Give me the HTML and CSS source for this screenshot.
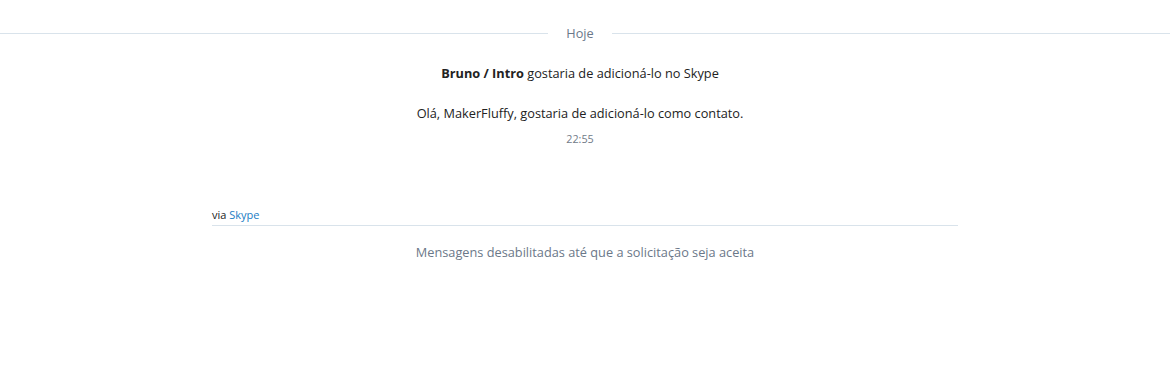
FILE: index.html
```html
<!DOCTYPE html>
<html lang="pt-BR">
<head>
  <meta charset="UTF-8" />
  <meta name="viewport" content="width=device-width, initial-scale=1.0" />
  <title>Solicitação de contato</title>
  <link rel="stylesheet" href="styles.css">
</head>
<body>
<div class="day">
  <span class="day-line"></span>
  <span class="day-label">Hoje</span>
  <span class="day-line day-line-end"></span>
</div>
<div class="request">
  <p class="request-title"><b>Bruno / Intro</b> gostaria de adicioná-lo no Skype</p>
  <p class="request-text">Olá, MakerFluffy, gostaria de adicioná-lo como contato.</p>
  <p class="request-time">22:55</p>
</div>
<div class="composer">
  <div class="via">via <a href="#">Skype</a></div>
  <div class="notice">Mensagens desabilitadas até que a solicitação seja aceita</div>
</div>
</body>
</html>
```

FILE: styles.css
```css
body {
    margin: 0;
    background: #fff;
    font-family: "Open Sans", "Noto Sans", sans-serif;
    font-size: 12.75px;
    color: #222;
}
p {
    margin: 0;
}
/* the message list keeps a 10px gutter on the right */
.day {
    display: flex;
    align-items: center;
    height: 20px;
    margin-top: 23px;
    padding-right: 10px;
}
.day-line {
    flex: 1;
    border-top: 1px solid #d9e3eb;
}
/* line runs on through the gutter */
.day-line-end {
    padding-right: 10px;
    margin-right: -10px;
}
.day-label {
    padding: 0 18px;
    line-height: 20px;
    color: #6b7889;
}
.request {
    text-align: center;
    padding: 20px 10px 0 0;
}
.request-title {
    line-height: 20px;
}
.request-title b {
    font-weight: 700;
}
.request-text {
    line-height: 20px;
    margin-top: 20px;
}
.request-time {
    font-size: 10.75px;
    line-height: 16px;
    margin-top: 8px;
    color: #717b88;
}
.composer {
    width: 746px;
    margin: 60px auto 0;
}
.via {
    font-size: 11px;
    line-height: 16px;
    padding-bottom: 2px;
    border-bottom: 1px solid #d9e3eb;
}
.via a {
    color: #1a7dc4;
    text-decoration: none;
}
.notice {
    text-align: center;
    line-height: 20px;
    margin-top: 16px;
    color: #6b7889;
}
```
